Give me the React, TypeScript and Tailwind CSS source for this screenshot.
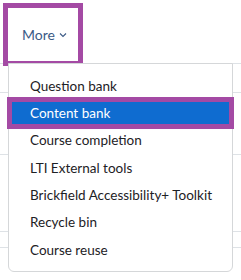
import React from "react";

const items = [
  "Question bank",
  "Content bank",
  "Course completion",
  "LTI External tools",
  "Brickfield Accessibility+ Toolkit",
  "Recycle bin",
  "Course reuse",
];

export default function App() {
  return (
    <div
      className="relative w-[241px] h-[280px] bg-white overflow-hidden"
      style={{ fontFamily: "Lato, 'Noto Sans', sans-serif" }}
    >
      {/* background page */}
      <div className="h-[64px] border-b border-[#dee2e6] flex items-start">
        <div className="mt-[3px] ml-[3px] w-[80px] h-[63px] border-[5px] border-[#a44aa4] bg-white flex items-center pl-[14px] text-[14px] text-[#3b5a86]">
          <span>More</span>
          <svg width="8" height="6" viewBox="0 0 8 6" className="ml-[4px] mt-[1px]">
            <path d="M1 1.5 L4 4.5 L7 1.5" fill="none" stroke="#3b5a86" strokeWidth="1.1" />
          </svg>
        </div>
      </div>
      <div className="h-[29px] border-b border-[#dee2e6]" />
      <div className="h-[62px] border-b border-[#dee2e6]" />
      <div className="h-[77px] border-b border-[#dee2e6]" />
      <div className="h-[16px] border-b border-[#dee2e6]" />

      {/* dropdown */}
      <div className="absolute left-[8px] top-[63px] w-[225px] bg-white border border-[#d5d7d9] rounded-b-[6px] py-[8px] text-[13.5px] text-[#1d2125]">
        {items.map((it) => (
          <div
            key={it}
            className={
              it === "Content bank"
                ? "h-[27.33px] pl-[21px] flex items-center whitespace-nowrap bg-[#0f6cd0] text-white outline-[5px] outline-solid outline-[#a44aa4] -outline-offset-[3px]"
                : "h-[27.33px] pl-[21px] flex items-center whitespace-nowrap"
            }
          >
            {it}
          </div>
        ))}
      </div>
    </div>
  );
}
